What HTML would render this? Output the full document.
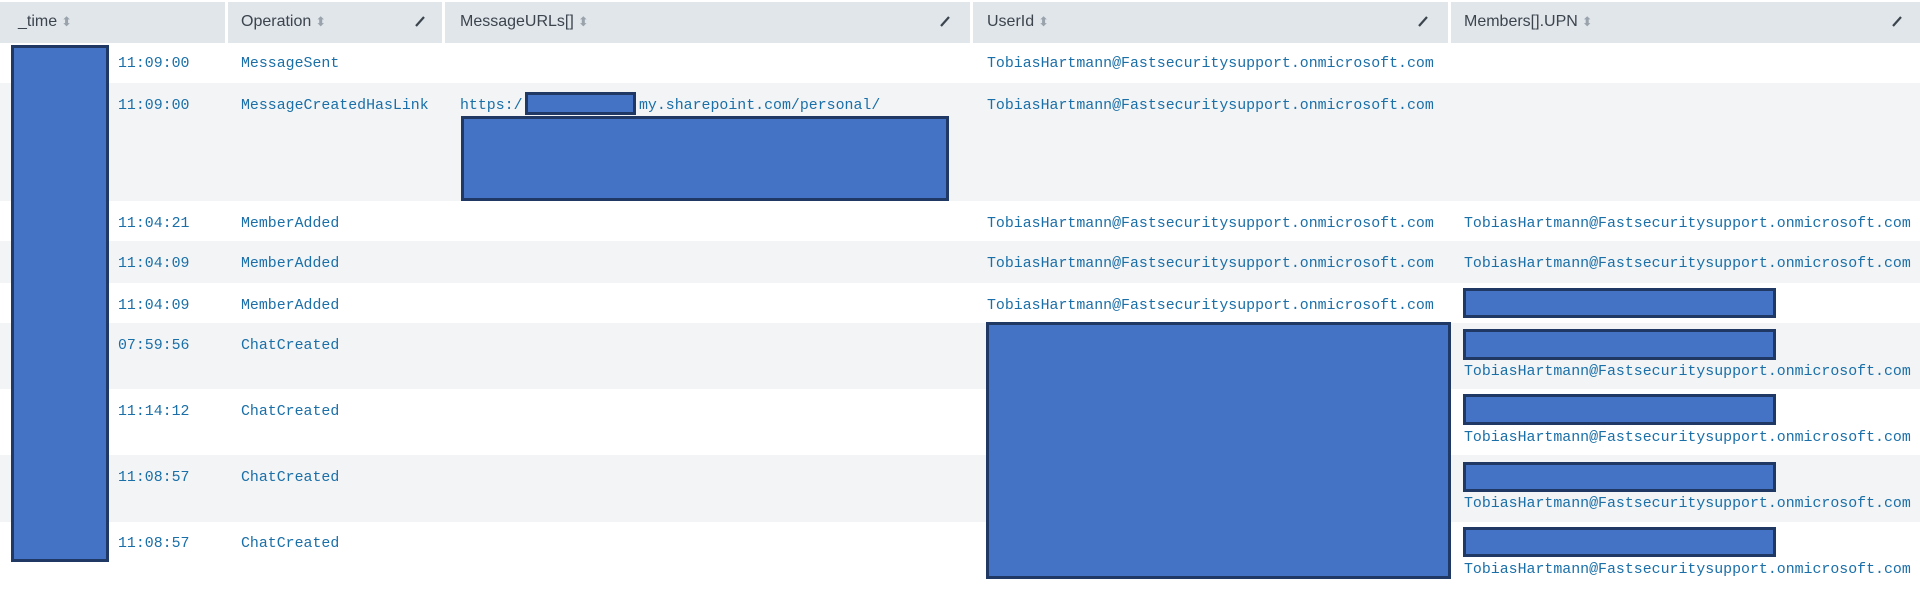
<!DOCTYPE html>
<html><head><meta charset="utf-8"><style>
body{margin:0;width:1920px;height:589px;background:#fff;position:relative;overflow:hidden;font-family:"Liberation Sans",sans-serif}
.row{position:absolute;left:0;width:1920px}
.hd{position:absolute;top:2px;height:41px;background:#e1e6eb}
.hl{position:absolute;top:13px;font-size:16px;color:#3c444d;white-space:nowrap}
.s{font-size:13px;color:#9aa3ab;margin-left:4px}
.m{position:absolute;font-family:"Liberation Mono",monospace;font-size:14.9px;color:#1a6fa8;white-space:nowrap;line-height:18px;margin-top:2px}
.b{position:absolute;background:#4472c4;border:3px solid #1f3864;box-sizing:border-box}
.p{position:absolute;top:14px;width:14px;height:14px}
</style></head><body>
<div class="hd" style="left:0;width:225px"></div>
<div class="hd" style="left:228px;width:214px"></div>
<div class="hd" style="left:445px;width:525px"></div>
<div class="hd" style="left:973px;width:475px"></div>
<div class="hd" style="left:1451px;width:469px"></div>
<div class="hl" style="left:18px">_time<span class="s">&#x2B0D;</span></div>
<div class="hl" style="left:241px">Operation<span class="s">&#x2B0D;</span></div>
<div class="hl" style="left:460px">MessageURLs[]<span class="s">&#x2B0D;</span></div>
<div class="hl" style="left:987px">UserId<span class="s">&#x2B0D;</span></div>
<div class="hl" style="left:1464px">Members[].UPN<span class="s">&#x2B0D;</span></div>
<svg class="p" style="left:413px" viewBox="0 0 14 14"><path d="M3 12L11 3" stroke="#3c444d" stroke-width="2.2"/></svg>
<svg class="p" style="left:938px" viewBox="0 0 14 14"><path d="M3 12L11 3" stroke="#3c444d" stroke-width="2.2"/></svg>
<svg class="p" style="left:1416px" viewBox="0 0 14 14"><path d="M3 12L11 3" stroke="#3c444d" stroke-width="2.2"/></svg>
<svg class="p" style="left:1890px" viewBox="0 0 14 14"><path d="M3 12L11 3" stroke="#3c444d" stroke-width="2.2"/></svg>

<div class="row" style="top:83px;height:118px;background:#f2f4f5"></div>
<div class="row" style="top:241px;height:42px;background:#f2f4f5"></div>
<div class="row" style="top:323px;height:66px;background:#f2f4f5"></div>
<div class="row" style="top:455px;height:67px;background:#f2f4f5"></div>

<div class="m" style="left:118px;top:53px">11:09:00</div><div class="m" style="left:241px;top:53px">MessageSent</div><div class="m" style="left:987px;top:53px">TobiasHartmann@Fastsecuritysupport.onmicrosoft.com</div>
<div class="m" style="left:118px;top:95px">11:09:00</div><div class="m" style="left:241px;top:95px">MessageCreatedHasLink</div><div class="m" style="left:460px;top:95px">https:/</div><div class="m" style="left:639px;top:95px">my.sharepoint.com/personal/</div><div class="m" style="left:987px;top:95px">TobiasHartmann@Fastsecuritysupport.onmicrosoft.com</div>
<div class="m" style="left:118px;top:213px">11:04:21</div><div class="m" style="left:241px;top:213px">MemberAdded</div><div class="m" style="left:987px;top:213px">TobiasHartmann@Fastsecuritysupport.onmicrosoft.com</div><div class="m" style="left:1464px;top:213px">TobiasHartmann@Fastsecuritysupport.onmicrosoft.com</div>
<div class="m" style="left:118px;top:253px">11:04:09</div><div class="m" style="left:241px;top:253px">MemberAdded</div><div class="m" style="left:987px;top:253px">TobiasHartmann@Fastsecuritysupport.onmicrosoft.com</div><div class="m" style="left:1464px;top:253px">TobiasHartmann@Fastsecuritysupport.onmicrosoft.com</div>
<div class="m" style="left:118px;top:295px">11:04:09</div><div class="m" style="left:241px;top:295px">MemberAdded</div><div class="m" style="left:987px;top:295px">TobiasHartmann@Fastsecuritysupport.onmicrosoft.com</div>
<div class="m" style="left:118px;top:335px">07:59:56</div><div class="m" style="left:241px;top:335px">ChatCreated</div><div class="m" style="left:1464px;top:361px">TobiasHartmann@Fastsecuritysupport.onmicrosoft.com</div>
<div class="m" style="left:118px;top:401px">11:14:12</div><div class="m" style="left:241px;top:401px">ChatCreated</div><div class="m" style="left:1464px;top:427px">TobiasHartmann@Fastsecuritysupport.onmicrosoft.com</div>
<div class="m" style="left:118px;top:467px">11:08:57</div><div class="m" style="left:241px;top:467px">ChatCreated</div><div class="m" style="left:1464px;top:493px">TobiasHartmann@Fastsecuritysupport.onmicrosoft.com</div>
<div class="m" style="left:118px;top:533px">11:08:57</div><div class="m" style="left:241px;top:533px">ChatCreated</div><div class="m" style="left:1464px;top:559px">TobiasHartmann@Fastsecuritysupport.onmicrosoft.com</div>

<div class="b" style="left:11px;top:45px;width:98px;height:517px"></div>
<div class="b" style="left:525px;top:92px;width:111px;height:23px"></div>
<div class="b" style="left:461px;top:116px;width:488px;height:85px"></div>
<div class="b" style="left:986px;top:322px;width:465px;height:257px"></div>
<div class="b" style="left:1463px;top:288px;width:313px;height:30px"></div>
<div class="b" style="left:1463px;top:329px;width:313px;height:31px"></div>
<div class="b" style="left:1463px;top:394px;width:313px;height:31px"></div>
<div class="b" style="left:1463px;top:462px;width:313px;height:30px"></div>
<div class="b" style="left:1463px;top:527px;width:313px;height:30px"></div>
</body></html>
